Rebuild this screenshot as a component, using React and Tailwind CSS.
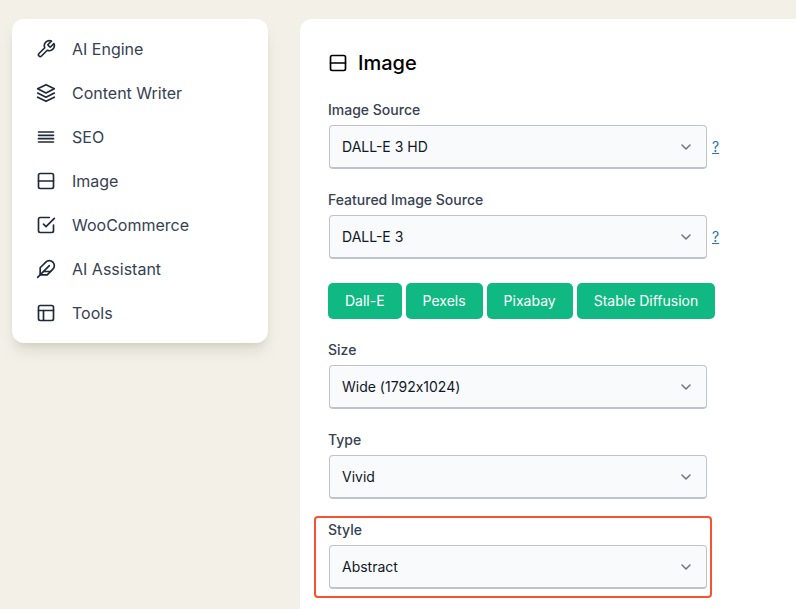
import { FiTool, FiLayers, FiAlignJustify, FiCheckSquare, FiFeather, FiLayout } from 'react-icons/fi';

function SplitIcon({ className }) {
  return (
    <svg
      viewBox="0 0 24 24"
      fill="none"
      stroke="currentColor"
      strokeWidth="2"
      strokeLinecap="round"
      strokeLinejoin="round"
      className={className}
      aria-hidden="true"
    >
      <rect x="3" y="3" width="18" height="18" rx="2" />
      <path d="M3 12h18" />
    </svg>
  );
}

const menu = [
  { label: 'AI Engine', Icon: FiTool },
  { label: 'Content Writer', Icon: FiLayers },
  { label: 'SEO', Icon: FiAlignJustify },
  { label: 'Image', Icon: SplitIcon },
  { label: 'WooCommerce', Icon: FiCheckSquare },
  { label: 'AI Assistant', Icon: FiFeather },
  { label: 'Tools', Icon: FiLayout },
];

const providers = ['Dall-E', 'Pexels', 'Pixabay', 'Stable Diffusion'];

function Sidebar() {
  return (
    <nav className="w-64 shrink-0 self-start rounded-xl bg-white p-2 shadow-lg shadow-[#78785a]/20">
      <ul>
        {menu.map(({ label, Icon }) => (
          <li key={label}>
            <a href="#" className="flex h-11 items-center gap-4 px-4 text-base text-gray-700">
              <Icon className="size-5 text-gray-800" />
              {label}
            </a>
          </li>
        ))}
      </ul>
    </nav>
  );
}

function Field({ id, label, options, help, highlighted, plainGlyphs }) {
  return (
    <div className="relative">
      <label htmlFor={id} className="block text-sm font-medium text-gray-700">
        {label}
      </label>
      <div className="mt-1 flex items-center gap-1 p-px">
        <div className={plainGlyphs ? 'relative w-full max-w-[378px] [font-variant-ligatures:no-contextual]' : 'relative w-full max-w-[378px]'}>
          <select
            id={id}
            className="block h-11 w-full appearance-none rounded-sm border border-b-2 border-[#c0c3c9] bg-gray-50 pr-10 pl-3 text-sm text-gray-900 [font-variant-ligatures:inherit]"
          >
            {options.map((option) => (
              <option key={option}>{option}</option>
            ))}
          </select>
          <svg
            viewBox="0 0 20 20"
            fill="none"
            stroke="currentColor"
            strokeWidth="1.5"
            strokeLinecap="round"
            strokeLinejoin="round"
            className="pointer-events-none absolute top-3 right-[11px] size-5 text-gray-500"
            aria-hidden="true"
          >
            <path d="m6 8 4 4 4-4" />
          </svg>
        </div>
        {help && (
          <a href="#" aria-label={`Help for ${label}`} className="px-px text-sm text-[#2271b1] underline">
            ?
          </a>
        )}
      </div>
      {highlighted && (
        <div className="pointer-events-none absolute -top-1 -bottom-2 -left-3.5 w-full max-w-[398px] rounded border-2 border-[#fa5230]" />
      )}
    </div>
  );
}

export default function App() {
  return (
    <div className="flex min-h-screen gap-8 overflow-hidden bg-[#f3f0e8] pt-[19px] pl-3 font-['Inter','Liberation_Sans',sans-serif]">
      <Sidebar />
      <main className="min-w-0 flex-1 rounded-tl-xl bg-white px-7 pt-7 pb-2">
        <h1 className="mb-[21px] flex h-8 items-center gap-2.5 text-xl font-medium text-black">
          <SplitIcon className="size-5" />
          Image
        </h1>
        <form className="flex flex-col gap-5">
          <Field id="source" label="Image Source" options={['DALL-E 3 HD', 'DALL-E 3']} help />
          <Field id="featured" label="Featured Image Source" options={['DALL-E 3', 'DALL-E 3 HD']} help />
          <div className="flex h-10 items-end gap-1 pb-px">
            {providers.map((name) => (
              <button
                key={name}
                type="button"
                className="h-9 rounded-[5px] bg-[#10b981] px-[17px] text-sm whitespace-nowrap text-white"
              >
                {name}
              </button>
            ))}
          </div>
          <Field id="size" label="Size" options={['Wide (1792x1024)']} plainGlyphs />
          <Field id="type" label="Type" options={['Vivid']} />
          <Field id="style" label="Style" options={['Abstract']} highlighted />
        </form>
      </main>
    </div>
  );
}
